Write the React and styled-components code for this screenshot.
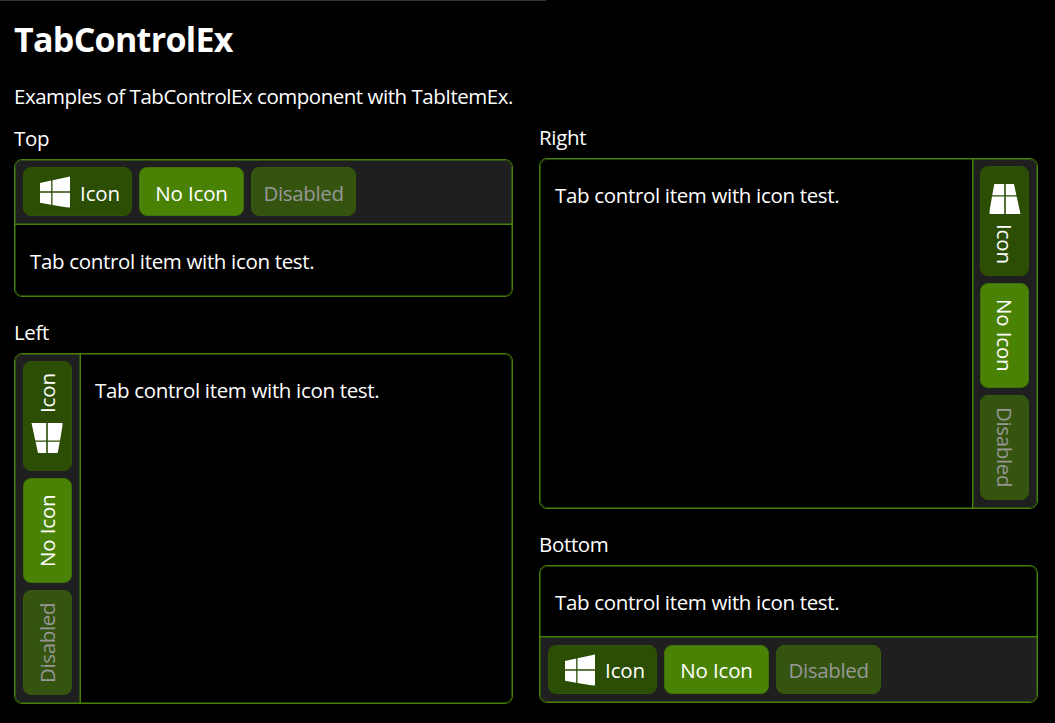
import React from "react";
import styled, { createGlobalStyle, css } from "styled-components";

const Global = createGlobalStyle`
  body { margin: 0; background: #000; }
  * { box-sizing: border-box; }
`;

const Page = styled.main`
  width: 1055px;
  height: 723px;
  background: #000;
  color: #fff;
  font-family: "Open Sans", sans-serif;
  font-size: 20.5px;
  line-height: 28px;
  letter-spacing: -0.33px;
  white-space: nowrap;
  overflow: hidden;
`;

const TopRule = styled.div`
  height: 1px;
  width: 546px;
  background: #333;
`;

const Columns = styled.div`
  display: flex;
  gap: 26px;
  padding-left: 14px;
`;

const Column = styled.section`
  width: 499px;
  display: flex;
  flex-direction: column;
  padding-top: ${(p) => p.$top}px;
`;

const Title = styled.h1`
  margin: 0 0 20px;
  font-size: 34px;
  line-height: 46px;
  font-weight: 700;
  letter-spacing: -0.7px;
`;

const Intro = styled.p`
  margin: 0 0 14px;
  letter-spacing: -0.48px;
`;

const Label = styled.h2`
  margin: 0 0 7px;
  font: inherit;
`;

const layouts = {
  top: {
    direction: "column",
    padding: "7px 8px 8px",
    line: css`border-bottom: 1px solid #468105; box-shadow: inset 0 -1px #2f4f10;`,
    content: "22px 15px",
  },
  bottom: {
    direction: "column-reverse",
    padding: "8px",
    line: css`border-top: 1px solid #468105; box-shadow: inset 0 1px #2f4f10;`,
    content: "22px 15px 0",
  },
  left: {
    direction: "row",
    padding: "7px 8px",
    line: css`border-right: 1px solid #468105; box-shadow: inset -1px 0 #2f4f10;`,
    content: "22px 14px",
  },
  right: {
    direction: "row-reverse",
    padding: "7px 8px 7px 7px",
    line: css`border-left: 1px solid #468105; box-shadow: inset 1px 0 #2f4f10;`,
    content: "22px 15px",
  },
};

const isVertical = (side) => side === "left" || side === "right";

const Control = styled.div`
  position: relative;
  display: flex;
  flex: none;
  flex-direction: ${(p) => layouts[p.$side].direction};
  height: ${(p) => p.$height}px;
  margin-bottom: 21px;
  border: 1px solid #468105;
  border-radius: 8px;
  overflow: hidden;

  &::after {
    content: "";
    position: absolute;
    inset: 0;
    border: 1px solid rgba(70, 129, 5, 0.5);
    border-radius: 7px;
    pointer-events: none;
  }
`;

const Strip = styled.div`
  display: flex;
  flex: none;
  flex-direction: ${(p) => (isVertical(p.$side) ? "column" : "row")};
  gap: 7px;
  padding: ${(p) => layouts[p.$side].padding};
  background: #1f1f1f;
  ${(p) => layouts[p.$side].line}
`;

const tones = {
  icon: css`background: #2b4d04; border-color: #2f5406; padding-inline-start: 5px;`,
  plain: css`background: #498205; border-color: #3f7105;`,
  disabled: css`
    background: #35540f;
    border-color: #36590d;
    color: #979797;
    letter-spacing: -0.35px;
  `,
};

const tabLength = (p) => {
  if (p.$tone !== "icon") return 105;
  return isVertical(p.$side) ? 110 : 109;
};

const Tab = styled.button`
  display: flex;
  flex: none;
  align-items: center;
  justify-content: center;
  gap: 10px;
  padding: 0;
  border: 1px solid;
  border-radius: 8px;
  font: inherit;
  letter-spacing: -0.15px;
  color: #fff;
  inline-size: ${tabLength}px;
  block-size: 49px;
  ${(p) => isVertical(p.$side) && css`writing-mode: vertical-rl;`}
  ${(p) => p.$side === "left" && css`transform: rotate(180deg);`}
  ${(p) => tones[p.$tone]}
`;

const Caption = styled.span`
  padding-block: ${(p) => ({ left: "0 2px", right: "0", top: "2px 0", bottom: "1px 0" })[p.$side]};
`;

const Logo = styled.svg`
  flex: none;
  width: 30px;
  height: 32px;
  fill: #fff;
  ${(p) => isVertical(p.$side) && css`margin: -1px 0; transform: rotate(90deg);`}
`;

const Content = styled.div`
  flex: 1;
  padding: ${(p) => layouts[p.$side].content};
`;

function WindowsLogo({ side }) {
  return (
    <Logo $side={side} viewBox="0 0 30 32" aria-hidden="true">
      <path d="M0 7L11.2 4.6V15.2H0ZM12.5 4.3L30 .5V15.2H12.5ZM0 16.8H11.2V28.8L0 26.7ZM12.5 16.8H30V31.5L26 31.3L12.5 29Z" />
    </Logo>
  );
}

function TabControl({ side, height }) {
  return (
    <Control $side={side} $height={height}>
      <Strip $side={side}>
        <Tab $side={side} $tone="icon">
          <WindowsLogo side={side} />
          <Caption $side={side}>Icon</Caption>
        </Tab>
        <Tab $side={side} $tone="plain">
          <Caption $side={side}>No Icon</Caption>
        </Tab>
        <Tab $side={side} $tone="disabled" disabled>
          <Caption $side={side}>Disabled</Caption>
        </Tab>
      </Strip>
      <Content $side={side}>Tab control item with icon test.</Content>
    </Control>
  );
}

export default function App() {
  return (
    <>
      <Global />
      <Page>
        <TopRule />
        <Columns>
          <Column $top={15}>
            <Title>TabControlEx</Title>
            <Intro>Examples of TabControlEx component with TabItemEx.</Intro>
            <Label>Top</Label>
            <TabControl side="top" height={138} />
            <Label>Left</Label>
            <TabControl side="left" height={351} />
          </Column>
          <Column $top={122}>
            <Label>Right</Label>
            <TabControl side="right" height={351} />
            <Label>Bottom</Label>
            <TabControl side="bottom" height={138} />
          </Column>
        </Columns>
      </Page>
    </>
  );
}
